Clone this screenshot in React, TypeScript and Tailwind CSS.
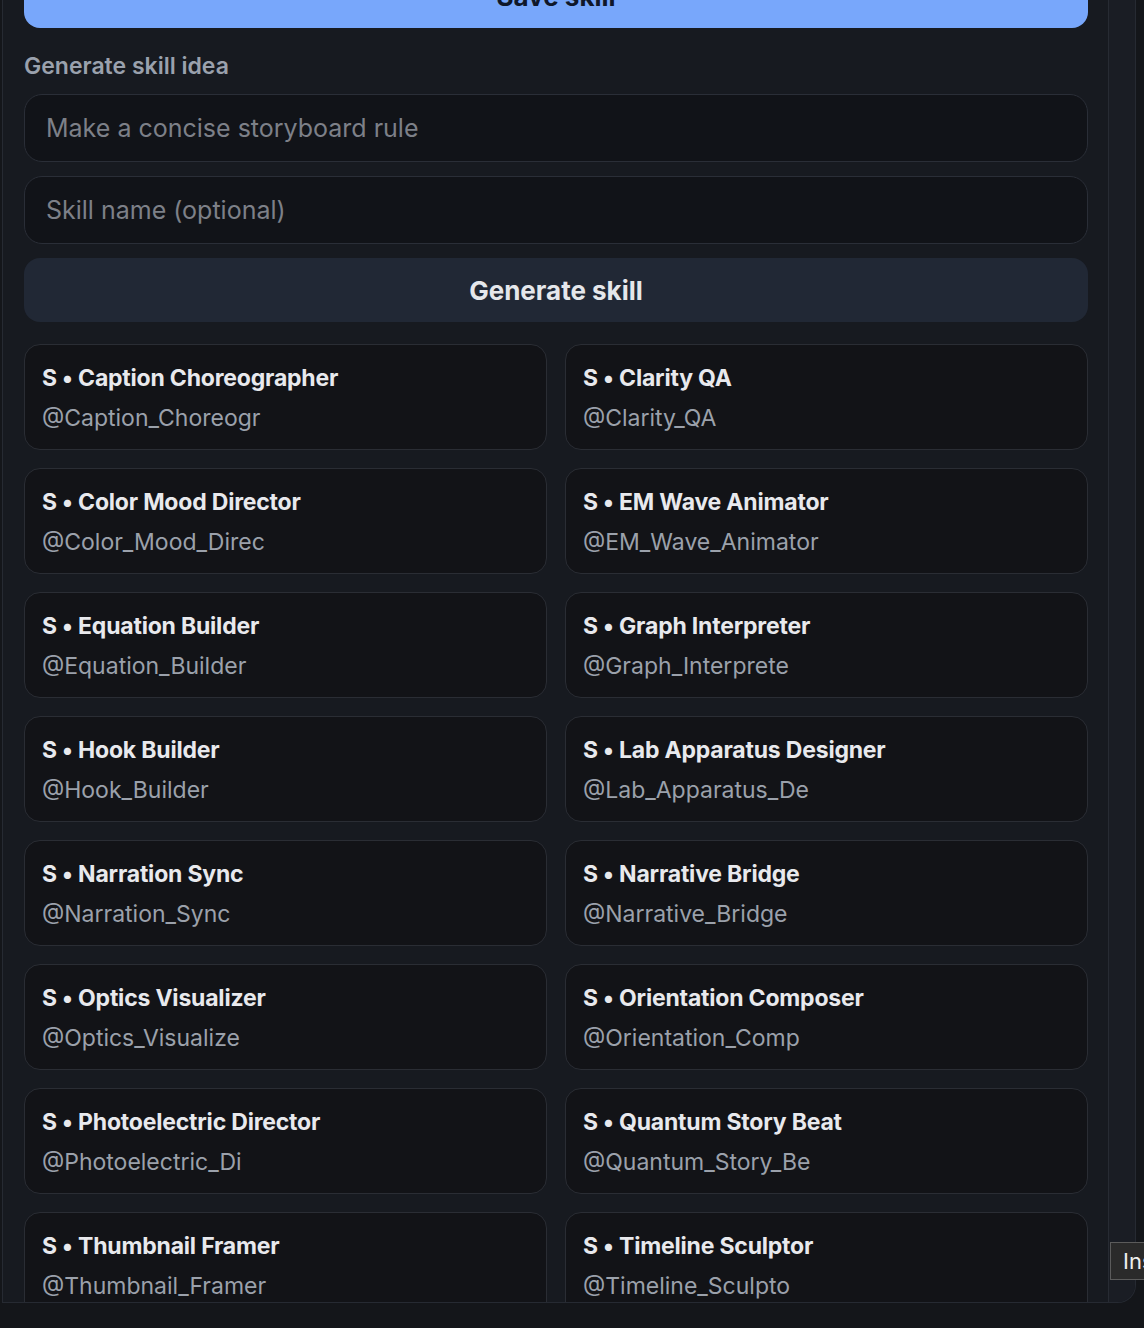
import React from 'react';

// skill cards shown in the grid
const skills = [
  { name: 'Caption Choreographer', handle: '@Caption_Choreogr' },
  { name: 'Clarity QA', handle: '@Clarity_QA' },
  { name: 'Color Mood Director', handle: '@Color_Mood_Direc' },
  { name: 'EM Wave Animator', handle: '@EM_Wave_Animator' },
  { name: 'Equation Builder', handle: '@Equation_Builder' },
  { name: 'Graph Interpreter', handle: '@Graph_Interprete' },
  { name: 'Hook Builder', handle: '@Hook_Builder' },
  { name: 'Lab Apparatus Designer', handle: '@Lab_Apparatus_De' },
  { name: 'Narration Sync', handle: '@Narration_Sync' },
  { name: 'Narrative Bridge', handle: '@Narrative_Bridge' },
  { name: 'Optics Visualizer', handle: '@Optics_Visualize' },
  { name: 'Orientation Composer', handle: '@Orientation_Comp' },
  { name: 'Photoelectric Director', handle: '@Photoelectric_Di' },
  { name: 'Quantum Story Beat', handle: '@Quantum_Story_Be' },
  { name: 'Thumbnail Framer', handle: '@Thumbnail_Framer' },
  { name: 'Timeline Sculptor', handle: '@Timeline_Sculpto' },
];

const font = { fontFamily: 'Inter, "Noto Sans", sans-serif' };

export default function App() {
  return (
    <div className="relative h-[1328px] w-[1144px] overflow-hidden bg-[#14161a]" style={font}>
      {/* panel */}
      <div className="ml-[2px] flex h-[1303px] w-[1134px] overflow-hidden rounded-br-[18px] border border-t-0 border-[#262a32] bg-[#171a20]">
        <div className="flex-1 pl-[21px] pr-[20px]">
          <button className="-mt-[36px] block h-16 w-full rounded-[16px] bg-[#78a7fb] text-[26px] font-bold text-[#0f172a]">
            Save skill
          </button>

          <div className="mt-[26px] text-[23px] font-semibold leading-6 text-[#9aa1ad]">
            Generate skill idea
          </div>

          <div className="mt-4 flex flex-col gap-[14px]">
            <input
              className="block h-[68px] w-full rounded-[18px] border border-[#2a2e37] bg-[#111318] px-[21px] text-[25px] text-[#d1d5db] outline-none placeholder:text-[#7d8088]"
              placeholder="Make a concise storyboard rule"
            />
            <input
              className="block h-[68px] w-full rounded-[18px] border border-[#2a2e37] bg-[#111318] px-[21px] text-[25px] text-[#d1d5db] outline-none placeholder:text-[#7d8088]"
              placeholder="Skill name (optional)"
            />
            <button className="block h-16 w-full rounded-[16px] bg-[#212835] text-[26px] font-bold text-[#e5e7eb]">
              Generate skill
            </button>
          </div>

          <div className="mt-[22px] grid grid-cols-2 gap-[18px]">
            {skills.map((s) => (
              <div
                key={s.name}
                className="h-[106px] rounded-[16px] border border-[#2a2d34] bg-[#121317] px-[17px] pt-[19px]"
              >
                <div className="text-[23px] font-bold leading-7 tracking-[-0.2px] text-[#e8e9ed]">
                  S • {s.name}
                </div>
                <div className="mt-3 text-[23px] leading-7 text-[#9ba1ab]">{s.handle}</div>
              </div>
            ))}
          </div>
        </div>

        {/* scrollbar strip */}
        <div className="w-[27px] border-l border-[#272b33] bg-[#1a1d24]" />
      </div>

      {/* tooltip peeking from the right edge */}
      <div className="absolute left-[1110px] top-[1242px] whitespace-nowrap border border-[#5b5b5b] bg-[#2a2a2a] px-[12px] py-[4px] text-[22px] leading-7 text-[#f0f0f0]">
        Insert skill
      </div>
    </div>
  );
}
